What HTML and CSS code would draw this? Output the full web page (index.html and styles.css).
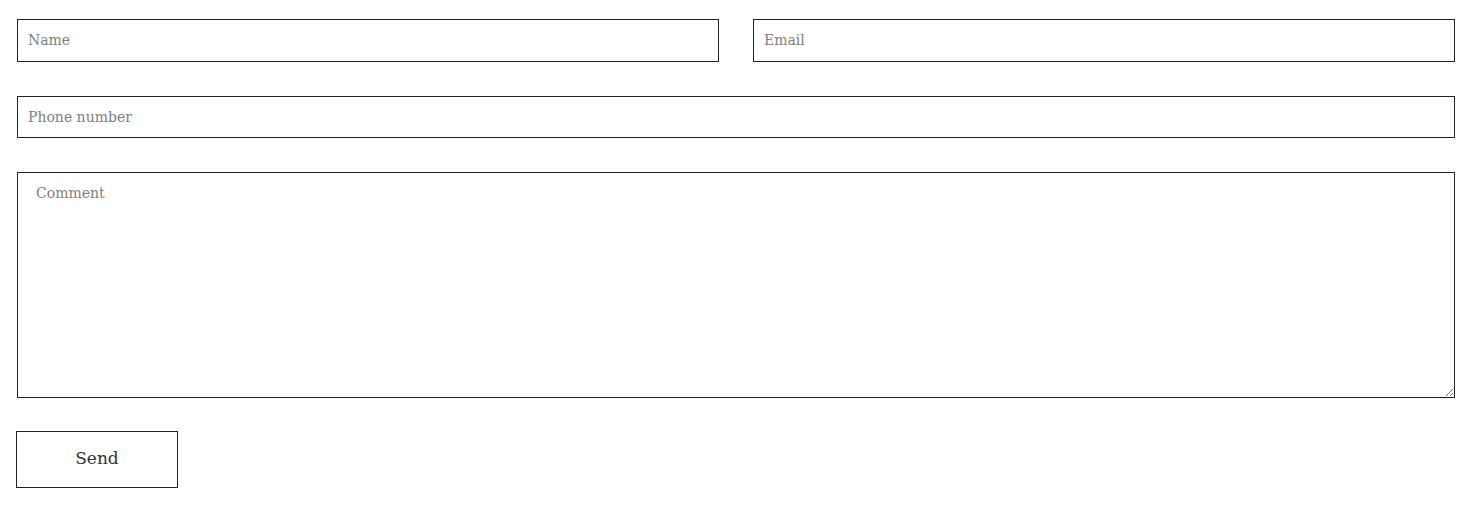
FILE: index.html
```html
<!DOCTYPE html>
<html lang="en">
<head>
  <meta charset="UTF-8" />
  <meta name="viewport" content="width=device-width, initial-scale=1.0"/>
  <title>Contact</title>
  <link rel="stylesheet" href="styles.css">
</head>
<body>
  <form class="contact-form" onsubmit="return false;">
    <div class="row two">
      <input type="text" class="field" placeholder="Name" />
      <input type="email" class="field" placeholder="Email" />
    </div>
    <div class="row">
      <input type="tel" class="field phone" placeholder="Phone number" />
    </div>
    <div class="row">
      <textarea class="field comment" placeholder="Comment"></textarea>
    </div>
    <button type="submit" class="send">Send</button>
  </form>
</body>
</html>
```

FILE: styles.css
```css
body {
  margin: 0;
  background-color: #fff;
  font-family: "DejaVu Serif", Georgia, serif;
  color: #333;
}
.contact-form {
  width: 1438px;
  padding: 19px 0 0 17px;
  display: flex;
  flex-direction: column;
  gap: 34px;
}
.row {
  display: flex;
}
.row.two {
  gap: 34px;
}
.field {
  flex: 1;
  box-sizing: border-box;
  height: 43px;
  border: 1px solid #222;
  border-radius: 0;
  padding: 0 10px 2px;
  font-family: "DejaVu Serif", Georgia, serif;
  font-size: 14px;
  color: #333;
  background: #fff;
  outline: none;
}
.field.phone {
  height: 42px;
  padding-bottom: 0;
}
.field::placeholder {
  color: #808080;
}
.comment {
  height: 226px;
  padding: 12px 18px;
  resize: vertical;
}
.send {
  width: 162px;
  height: 57px;
  margin-left: -1px;
  margin-top: -1px;
  padding: 0 0 3px;
  border: 1px solid #222;
  background: #fff;
  font-family: "DejaVu Serif", Georgia, serif;
  font-size: 17px;
  color: #333;
  cursor: pointer;
}
```
